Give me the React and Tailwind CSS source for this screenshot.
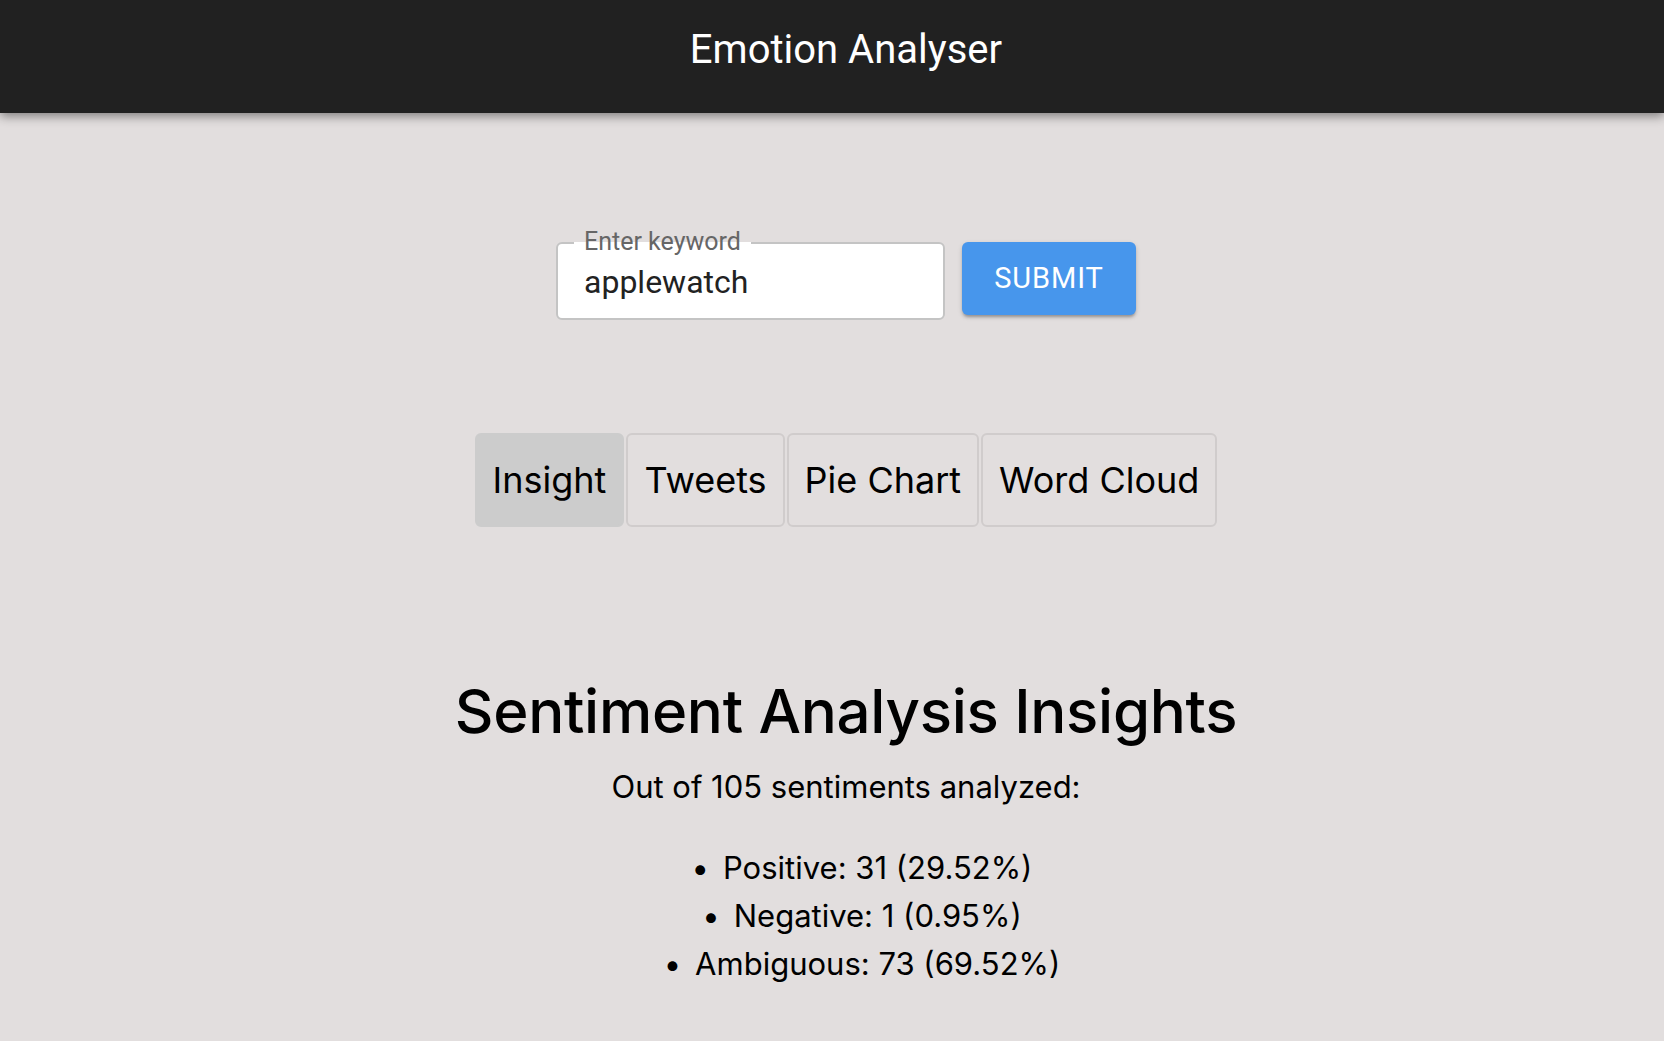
import React, { useState } from 'react';

const tabs = ['Insight', 'Tweets', 'Pie Chart', 'Word Cloud'];

const stats = [
    { label: 'Positive', count: 31, pct: '29.52' },
    { label: 'Negative', count: 1, pct: '0.95' },
    { label: 'Ambiguous', count: 73, pct: '69.52' },
];

const App = () => {
    const [keyword, setKeyword] = useState('applewatch');
    const [active, setActive] = useState('Insight');

    return (
        <div className="min-h-screen bg-[#e2dede] font-['Inter',sans-serif] text-black">
            {/* app bar */}
            <header className="relative z-10 h-[113px] bg-[#212121] pl-[28px] pt-[28px] shadow-[0_3px_10px_rgba(0,0,0,0.45)]">
                <h1 className="text-center font-['Roboto',sans-serif] text-[40px] leading-[44px] text-white">
                    Emotion Analyser
                </h1>
            </header>

            <main className="flex flex-col items-center pl-[28px]">
                {/* search form */}
                <form className="mt-[129px] flex items-start gap-[17px] font-['Roboto',sans-serif]">
                    <div className="relative h-[78px] w-[389px] rounded-[6px] border-2 border-[#c4c4c4] bg-white">
                        <span className="absolute left-[16px] top-[-16px] px-[10px] text-[25px] leading-[28px] text-[#666] [background:linear-gradient(to_bottom,transparent_50%,white_50%)]">
                            Enter keyword
                        </span>
                        <input
                            value={keyword}
                            onChange={(e) => setKeyword(e.target.value)}
                            className="h-full w-full rounded-[6px] bg-transparent pl-[26px] pt-[2px] text-[32px] text-[#222] outline-none"
                        />
                    </div>
                    <button
                        type="button"
                        className="h-[73px] w-[174px] rounded-[6px] bg-[#4796ec] text-[29px] font-normal tracking-[0.03em] text-white shadow-[0_3px_3px_-1px_rgba(0,0,0,0.25),0_2px_5px_rgba(0,0,0,0.15)]"
                    >
                        SUBMIT
                    </button>
                </form>

                {/* tabs */}
                <div className="mt-[113px] flex gap-[2px]">
                    {tabs.map((t) => (
                        <button
                            key={t}
                            type="button"
                            onClick={() => setActive(t)}
                            className={
                                active === t
                                    ? 'h-[94px] rounded-[6px] border-2 border-[#cccccc] bg-[#cccccc] px-[16px] text-[36px] text-black'
                                    : 'h-[94px] rounded-[6px] border-2 border-[#d0cccc] bg-transparent px-[16px] text-[36px] text-black'
                            }
                        >
                            {t}
                        </button>
                    ))}
                </div>

                {/* insights */}
                <section className="mt-[146px] text-center">
                    <h2 className="text-[60px] font-medium leading-[76px] tracking-[-0.005em]">Sentiment Analysis Insights</h2>
                    <p className="mt-[20px] text-[31px] leading-[36px]">Out of 105 sentiments analyzed:</p>
                    <ul className="mt-[39px] pl-[32px] text-[31px] leading-[48px]">
                        {stats.map((s) => (
                            <li key={s.label} className="before:mr-[14px] before:content-['•']">
                                {s.label}: {s.count} ({s.pct}%)
                            </li>
                        ))}
                    </ul>
                </section>
            </main>
        </div>
    );
};

export default App;
